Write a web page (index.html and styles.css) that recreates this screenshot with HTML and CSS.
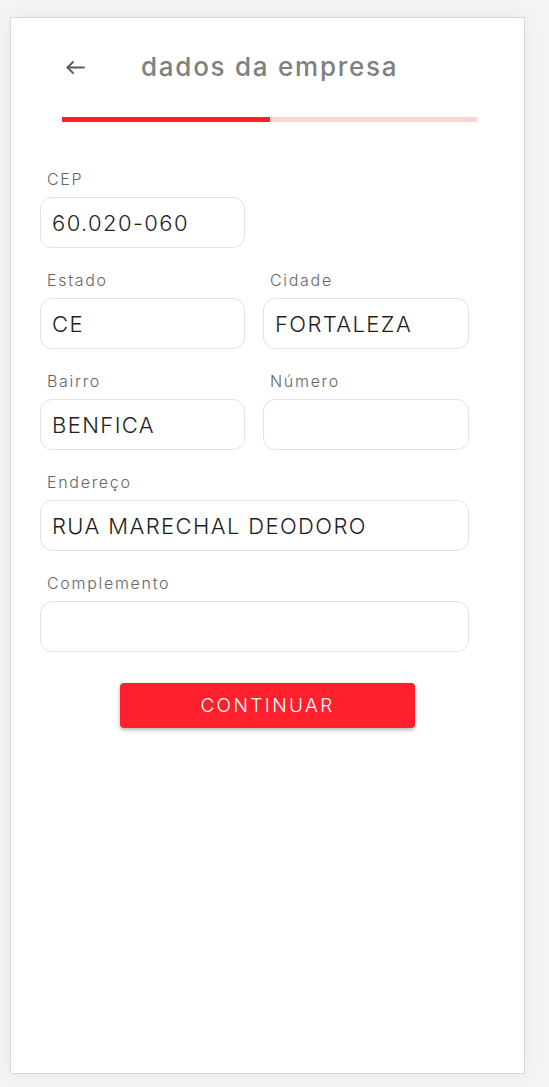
FILE: index.html
```html
<!DOCTYPE html>
<html lang="pt-BR">
<head>
<meta charset="utf-8">
<title>dados da empresa</title>
<link rel="stylesheet" href="styles.css">
</head>
<body>
<main class="card">
  <header class="header">
    <span class="back" aria-label="voltar">
      <svg width="19" height="13" viewBox="0 0 19 13" fill="none" stroke="#5a5a5a" stroke-width="1.8" stroke-linecap="round" stroke-linejoin="round">
        <path d="M18 6.5H1.5"/>
        <path d="M7 1L1.5 6.5 7 12"/>
      </svg>
    </span>
    <h1 class="title">dados da empresa</h1>
  </header>
  <div class="progress"><div class="progress-fill"></div></div>

  <form class="form">
    <div class="field">
      <label class="label">CEP</label>
      <div class="input">60.020-060</div>
    </div>
    <div></div>
    <div class="field">
      <label class="label">Estado</label>
      <div class="input">CE</div>
    </div>
    <div class="field">
      <label class="label">Cidade</label>
      <div class="input">FORTALEZA</div>
    </div>
    <div class="field">
      <label class="label">Bairro</label>
      <div class="input">BENFICA</div>
    </div>
    <div class="field">
      <label class="label">Número</label>
      <div class="input"></div>
    </div>
    <div class="field wide">
      <label class="label">Endereço</label>
      <div class="input">RUA MARECHAL DEODORO</div>
    </div>
    <div class="field wide">
      <label class="label">Complemento</label>
      <div class="input"></div>
    </div>
  </form>

  <div class="actions">
    <button class="btn" type="button">CONTINUAR</button>
  </div>
</main>
</body>
</html>
```

FILE: styles.css
```css
html, body {
  margin: 0;
  padding: 0;
}
body {
  background: #f3f4f4;
  padding: 17px 0 0 10px;
  font-family: "Inter", "Open Sans", "Liberation Sans", sans-serif;
  height: 1087px;
  box-sizing: border-box;
  overflow: hidden;
}
.card {
  width: 515px;
  height: 1057px;
  box-sizing: border-box;
  background: #fff;
  border: 1px solid #d9d9d9;
  box-shadow: 0 0 18px rgba(0, 0, 0, 0.05);
  display: flex;
  flex-direction: column;
}
.header {
  display: flex;
  align-items: center;
  height: 40px;
  margin-top: 29px;
  padding-left: 55px;
}
.back {
  display: flex;
  width: 19px;
  height: 13px;
}
.title {
  margin: 0 0 0 56px;
  font-size: 26px;
  font-weight: 500;
  color: #808080;
  letter-spacing: 1.75px;
  line-height: 40px;
}
.progress {
  margin: 30px 0 0 51px;
  width: 415px;
  height: 5px;
  background: #ffd3d5;
  display: flex;
}
.progress-fill {
  width: 208px;
  height: 5px;
  background: #ff1f2d;
}
.form {
  display: grid;
  grid-template-columns: 205px 206px;
  column-gap: 18px;
  row-gap: 22px;
  margin: 47px 0 0 29px;
}
.field {
  display: flex;
  flex-direction: column;
}
.wide {
  grid-column: 1 / 3;
}
.label {
  display: block;
  height: 20px;
  line-height: 20px;
  font-size: 16px;
  font-weight: 300;
  letter-spacing: 1.7px;
  color: #666;
  padding-left: 7px;
  margin-bottom: 8px;
}
.input {
  height: 51px;
  box-sizing: border-box;
  border: 1px solid #e2e2e2;
  border-radius: 12px;
  padding: 0 11px;
  display: flex;
  align-items: center;
  font-size: 22px;
  font-weight: 300;
  letter-spacing: 1.4px;
  color: #1e1e1e;
}
.actions {
  display: flex;
  justify-content: center;
  margin-top: 31px;
}
.btn {
  width: 295px;
  height: 45px;
  border: none;
  border-radius: 4px;
  background: #ff1f2d;
  color: #fff;
  font-family: inherit;
  font-size: 19px;
  font-weight: 300;
  letter-spacing: 2.4px;
  box-shadow: 0 2px 4px rgba(0, 0, 0, 0.3);
  cursor: pointer;
}
```
